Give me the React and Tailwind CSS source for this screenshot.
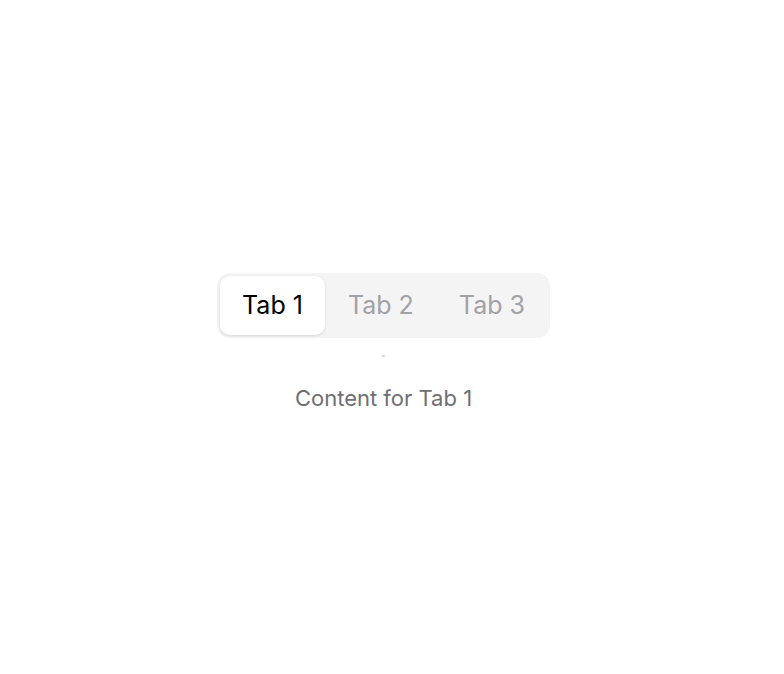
import { useState } from "react";

const tabs = ["Tab 1", "Tab 2", "Tab 3"];

export default function App() {
  const [active, setActive] = useState(0);

  return (
    <div
      className="flex h-screen w-full flex-col items-center justify-center bg-white pr-[17px] pt-[7px]"
      style={{ fontFamily: "Inter, 'Noto Sans', sans-serif" }}
    >
      <div className="flex rounded-[13px] bg-[#f4f4f4] p-[3px]">
        {tabs.map((t, i) => (
          <button
            key={t}
            onClick={() => setActive(i)}
            className={`h-[59px] rounded-[10px] px-[22.5px] text-[25px] leading-none ${
              active === i
                ? "bg-white text-black shadow-[0_1px_3px_rgba(0,0,0,0.12)]"
                : "text-[#a1a1a6]"
            }`}
          >
            {t}
          </button>
        ))}
      </div>
      <div className="mt-[17px] h-[2px] w-[3px] rounded-full bg-[#d4d4d4]" />
      <p className="mt-[30px] text-[22px] leading-none text-[#6e6e73]">
        Content for {tabs[active]}
      </p>
    </div>
  );
}
